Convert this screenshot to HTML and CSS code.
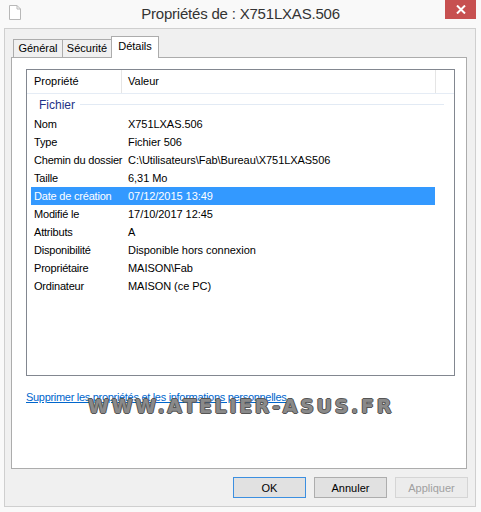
FILE: index.html
```html
<!DOCTYPE html>
<html lang="fr">
<head>
    <meta charset="UTF-8">
    <title>Propriétés de : X751LXAS.506</title>
    <link rel="stylesheet" href="styles.css">
</head>
<body>
    <!-- barre de titre -->
    <div class="titlebar">
        <svg class="doc-icon" width="12" height="15" viewBox="0 0 12 15">
            <path d="M0.5 0.5 H8 L11.5 4 V14.5 H0.5 Z" fill="#fff" stroke="#b8b8b8"/>
            <path d="M8 0.5 V4 H11.5" fill="none" stroke="#b8b8b8"/>
        </svg>
        <div class="title">Propriétés de : X751LXAS.506</div>
        <div class="close-btn">
            <svg width="10" height="9" viewBox="0 0 10 9">
                <path d="M1 0.5 L9 8.5 M9 0.5 L1 8.5" stroke="#fff" stroke-width="2"/>
            </svg>
        </div>
    </div>

    <div class="window">
        <div class="tabs">
            <div class="tab tab-general">Général</div>
            <div class="tab tab-secu">Sécurité</div>
            <div class="tab tab-details active">Détails</div>
        </div>

        <div class="panel">
            <div class="listview">
                <div class="lv-header">
                    <div class="hcol hcol-prop">Propriété</div>
                    <div class="hcol hcol-val">Valeur</div>
                    <div class="hcol hcol-rest"></div>
                </div>
                <div class="group">
                    <span class="group-name">Fichier</span>
                    <span class="group-line"></span>
                </div>
                <div class="row"><span class="k">Nom</span><span class="v">X751LXAS.506</span></div>
                <div class="row"><span class="k">Type</span><span class="v">Fichier 506</span></div>
                <div class="row"><span class="k">Chemin du dossier</span><span class="v">C:\Utilisateurs\Fab\Bureau\X751LXAS506</span></div>
                <div class="row"><span class="k">Taille</span><span class="v">6,31 Mo</span></div>
                <div class="row selected"><span class="k">Date de création</span><span class="v">07/12/2015 13:49</span></div>
                <div class="row"><span class="k">Modifié le</span><span class="v">17/10/2017 12:45</span></div>
                <div class="row"><span class="k">Attributs</span><span class="v">A</span></div>
                <div class="row"><span class="k">Disponibilité</span><span class="v">Disponible hors connexion</span></div>
                <div class="row"><span class="k">Propriétaire</span><span class="v">MAISON\Fab</span></div>
                <div class="row"><span class="k">Ordinateur</span><span class="v">MAISON (ce PC)</span></div>
            </div>

            <a class="remove-link" href="#">Supprimer les propriétés et les informations personnelles</a>
            <div class="watermark">WWW.ATELIER-ASUS.FR</div>
        </div>

        <div class="buttons">
            <button class="btn btn-default">OK</button>
            <button class="btn">Annuler</button>
            <button class="btn" disabled>Appliquer</button>
        </div>
    </div>
</body>
</html>
```

FILE: styles.css
```css
body {
    margin: 0;
    width: 481px;
    height: 512px;
    background-color: #f9f9f9;
    font-family: "Liberation Sans", Arial, sans-serif;
    font-size: 11px;
    color: #000;
    overflow: hidden;
}
.titlebar {
    height: 28px;
    display: flex;
    align-items: flex-start;
    position: relative;
}
.doc-icon {
    margin: 5px 0 0 9px;
}
.title {
    position: absolute;
    left: 0;
    right: 0;
    top: 5px;
    text-align: center;
    font-size: 15px;
    letter-spacing: -0.2px;
    color: #333;
}
.close-btn {
    position: absolute;
    left: 445px;
    top: 0;
    width: 31px;
    height: 19px;
    background-color: #c75050;
    display: flex;
    align-items: center;
    justify-content: center;
}
.window {
    margin-left: 4px;
    width: 470px;
    height: 477px;
    border: 1px solid #cfcfcf;
    background-color: #f0f0f0;
    display: flex;
    flex-direction: column;
}
.tabs {
    display: flex;
    align-items: flex-end;
    height: 21px;
    margin: 7px 0 0 8px;
    position: relative;
    z-index: 1;
}
.tab {
    box-sizing: border-box;
    height: 18px;
    line-height: 17px;
    text-align: center;
    border: 1px solid #acacac;
    border-bottom: none;
    margin-right: -1px;
    background-color: #f0f0f0;
}
.tab-general {
    width: 50px;
}
.tab-secu {
    width: 50px;
}
.tab-details {
    width: 48px;
}
.tab.active {
    height: 22px;
    line-height: 19px;
    background-color: #fff;
    margin-bottom: -1px;
}
.panel {
    margin-left: 6px;
    width: 454px;
    height: 410px;
    border: 1px solid #acacac;
    background-color: #fff;
    position: relative;
}
.listview {
    margin: 11px 0 0 14px;
    width: 427px;
    height: 305px;
    border: 1px solid #828790;
}
.lv-header {
    display: flex;
    height: 23px;
    border-bottom: 1px solid #e5ecf5;
}
.hcol {
    line-height: 23px;
    border-right: 1px solid #e5e5e5;
}
.hcol-prop {
    width: 87px;
    padding-left: 7px;
}
.hcol-val {
    width: 307px;
    padding-left: 6px;
}
.hcol-rest {
    border-right: none;
}
.group {
    display: flex;
    align-items: center;
    height: 21px;
    padding-left: 12px;
    margin-right: 10px;
}
.group-name {
    color: #1e3287;
    font-size: 12px;
}
.group-line {
    flex: 1;
    height: 1px;
    margin-left: 5px;
    background-color: #e2eaf4;
}
.row {
    display: flex;
    height: 18px;
    line-height: 19px;
    margin-left: 4px;
    width: 404px;
}
.row .k {
    width: 94px;
    padding-left: 3px;
    letter-spacing: -0.2px;
}
.row .v {
    letter-spacing: -0.05px;
}
.row.selected {
    background-color: #3399ff;
    color: #fff;
}
.remove-link {
    display: inline-block;
    margin: 15px 0 0 14px;
    color: #0066cc;
    letter-spacing: -0.3px;
    text-decoration: underline;
}
/* filigrane du site */
.watermark {
    position: absolute;
    left: 76px;
    top: 337px;
    font-family: "DejaVu Sans", sans-serif;
    font-weight: bold;
    font-size: 19px;
    letter-spacing: 2.7px;
    color: #8a8a8a;
    text-shadow: -1px 0 #555, 1px 0 #555, 0 -1px #555, 0 1px #555;
}
.buttons {
    display: flex;
    justify-content: flex-end;
    gap: 8px;
    margin: 8px 7px 0 0;
}
.btn {
    width: 73px;
    height: 21px;
    padding: 0;
    font-family: "Liberation Sans", Arial, sans-serif;
    font-size: 11px;
    color: #000;
    background-color: #e1e1e1;
    border: 1px solid #adadad;
}
.btn-default {
    border-color: #3c8fe0;
}
.btn:disabled {
    color: #a0a0a0;
    background-color: #ececec;
    border-color: #d5d5d5;
}
```
